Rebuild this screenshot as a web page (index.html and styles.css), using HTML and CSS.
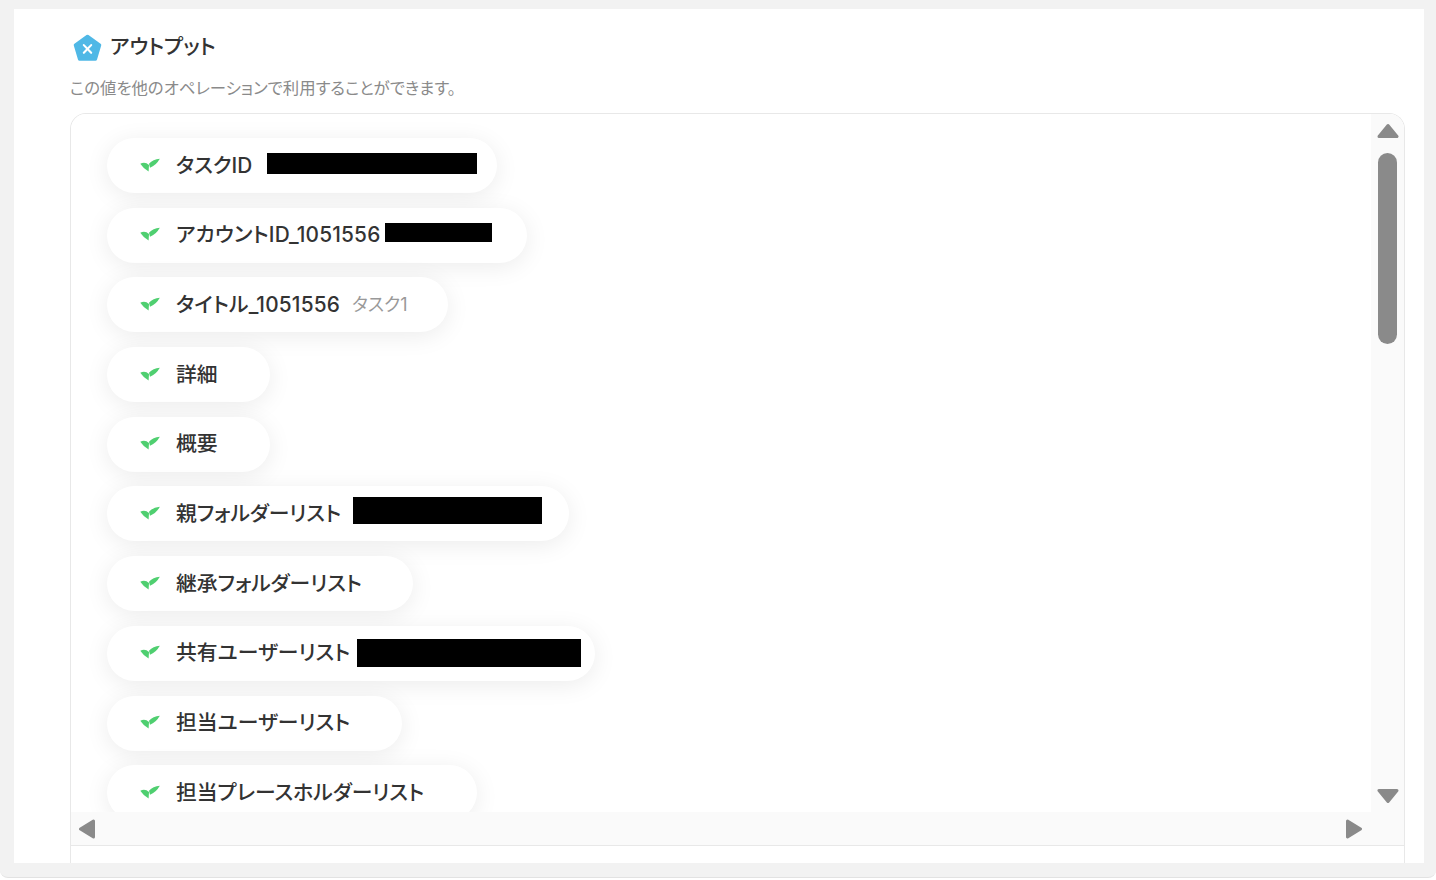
FILE: index.html
```html
<!DOCTYPE html>
<html lang="ja">
<head>
    <meta charset="UTF-8">
    <meta name="viewport" content="width=device-width, initial-scale=1.0">
    <title>アウトプット</title>
    <link rel="stylesheet" href="styles.css">
</head>
<body>

    <!-- チェックアイコン -->
    <svg class="defs" width="0" height="0">
        <symbol id="check" viewBox="0 0 20 14">
            <path d="M0.3 5.8 Q5 3.4 9 7 L8.6 13.4 Q3.6 11 0.3 5.8 Z" fill="#4fcf70"/>
            <path d="M10 9.8 L9 5.8 Q13 1.2 19.8 0.8 Q16.5 7 10 9.8 Z" fill="#4fcf70"/>
        </symbol>
    </svg>

    <div class="frame">
        <div class="card">

            <!-- 見出し -->
            <div class="heading">
                <svg class="heading-icon" viewBox="0 0 30 30">
                    <path d="M15 2.5 L27.5 11.5 L23.2 26 L6.8 26 L2.5 11.5 Z" fill="#4fb8e6" stroke="#4fb8e6" stroke-width="3.5" stroke-linejoin="round"/>
                    <path d="M11.2 11.5 L18.8 19.5 M18.8 11.5 L11.2 19.5" stroke="#fff" stroke-width="2.2" stroke-linecap="round"/>
                </svg>
                <h2>アウトプット</h2>
            </div>
            <p class="note">この値を他のオペレーションで利用することができます。</p>

            <div class="output-box">
                <div class="list-view">
                    <ul class="pill-list">
                        <li class="pill w1">
                            <svg class="check"><use href="#check"/></svg>
                            <span class="label">タスクID</span>
                            <span class="mask m1"></span>
                        </li>
                        <li class="pill w2">
                            <svg class="check"><use href="#check"/></svg>
                            <span class="label label-num">アカウントID_1051556</span>
                            <span class="mask m2"></span>
                        </li>
                        <li class="pill w3">
                            <svg class="check"><use href="#check"/></svg>
                            <span class="label label-num">タイトル_1051556</span>
                            <span class="value">タスク1</span>
                        </li>
                        <li class="pill w4">
                            <svg class="check"><use href="#check"/></svg>
                            <span class="label">詳細</span>
                        </li>
                        <li class="pill w4">
                            <svg class="check"><use href="#check"/></svg>
                            <span class="label">概要</span>
                        </li>
                        <li class="pill w6">
                            <svg class="check"><use href="#check"/></svg>
                            <span class="label">親フォルダーリスト</span>
                            <span class="mask m6"></span>
                        </li>
                        <li class="pill w7">
                            <svg class="check"><use href="#check"/></svg>
                            <span class="label">継承フォルダーリスト</span>
                        </li>
                        <li class="pill w8">
                            <svg class="check"><use href="#check"/></svg>
                            <span class="label">共有ユーザーリスト</span>
                            <span class="mask m8"></span>
                        </li>
                        <li class="pill w9">
                            <svg class="check"><use href="#check"/></svg>
                            <span class="label">担当ユーザーリスト</span>
                        </li>
                        <li class="pill w10">
                            <svg class="check"><use href="#check"/></svg>
                            <span class="label">担当プレースホルダーリスト</span>
                        </li>
                    </ul>

                    <!-- 縦スクロールバー -->
                    <div class="vbar">
                        <svg class="arrow-v" viewBox="0 0 22 16"><path d="M11 2.5 L20 13.5 L2 13.5 Z" fill="#8a8a8a" stroke="#8a8a8a" stroke-width="3" stroke-linejoin="round"/></svg>
                        <div class="vbar-track"><div class="vbar-thumb"></div></div>
                        <svg class="arrow-v" viewBox="0 0 22 16"><path d="M2 2.5 L20 2.5 L11 13.5 Z" fill="#8a8a8a" stroke="#8a8a8a" stroke-width="3" stroke-linejoin="round"/></svg>
                    </div>

                    <!-- 横スクロールバー -->
                    <div class="hbar">
                        <svg class="arrow-h" viewBox="0 0 16 20"><path d="M14.5 2 L14.5 18 L1.5 10 Z" fill="#8a8a8a" stroke="#8a8a8a" stroke-width="3" stroke-linejoin="round"/></svg>
                        <svg class="arrow-h" viewBox="0 0 16 20"><path d="M1.5 2 L14.5 10 L1.5 18 Z" fill="#8a8a8a" stroke="#8a8a8a" stroke-width="3" stroke-linejoin="round"/></svg>
                    </div>
                    <div class="corner"></div>
                </div>
            </div>

        </div>
    </div>

</body>
</html>
```

FILE: styles.css
```css
/* リセット */
* {
    margin: 0;
    padding: 0;
    box-sizing: border-box;
    font-family: 'Inter', 'Noto Sans CJK JP', sans-serif;
    font-feature-settings: "palt";
}

body {
    background: #ffffff;
    overflow: hidden;
}

.defs {
    position: absolute;
}

/* 外枠 */
.frame {
    height: 878px;
    padding: 9px 12px 14px 14px;
    background: #f2f2f2;
    border-bottom: 1px solid #e2e2e2;
    border-radius: 0 0 8px 8px;
}

.card {
    height: 100%;
    padding: 0 19px 0 56px;
    background: #ffffff;
    overflow: hidden;
}

/* 見出し */
.heading {
    display: flex;
    align-items: center;
    gap: 8px;
    height: 48px;
    padding: 25px 0 0 3px;
}

.heading-icon {
    width: 29px;
    height: 29px;
    flex-shrink: 0;
    margin-top: 5px;
}

.heading h2 {
    font-size: 20.8px;
    font-weight: 500;
    color: #333333;
    margin-top: -1px;
}

.note {
    margin-top: 19px;
    font-size: 16.4px;
    line-height: 24px;
    color: #8a8a8a;
}

/* 出力ボックス */
.output-box {
    margin-top: 13px;
    height: 760px;
    border: 1px solid #e8e8e8;
    border-bottom: none;
    border-radius: 16px 16px 0 0;
    overflow: hidden;
}

.list-view {
    display: grid;
    grid-template-columns: 1fr 33px;
    grid-template-rows: 698px 33px;
    border-bottom: 1px solid #e8e8e8;
    background: #ffffff;
}

.pill-list {
    list-style: none;
    display: flex;
    flex-direction: column;
    gap: 14.7px;
    padding: 24px 0 0 36px;
    overflow: hidden;
}

.pill {
    display: flex;
    align-items: center;
    flex-shrink: 0;
    height: 55px;
    padding-left: 33px;
    background: #ffffff;
    border-radius: 28px;
    box-shadow: 0 4px 24px rgba(0, 0, 0, 0.08);
}

/* ピルの幅 */
.w1 { width: 390px; }
.w2 { width: 420px; }
.w3 { width: 341px; }
.w4 { width: 163px; }
.w6 { width: 462px; }
.w7 { width: 306px; }
.w8 { width: 488px; }
.w9 { width: 295px; }
.w10 { width: 370px; }

.check {
    width: 20px;
    height: 14px;
    flex-shrink: 0;
    margin: 0 16px 2px 0;
}

.label {
    padding-bottom: 4px;
    font-size: 20.8px;
    font-weight: 500;
    color: #333333;
    white-space: nowrap;
}

.label-num {
    letter-spacing: 0.2px;
}

.value {
    margin-left: 12px;
    margin-bottom: 3px;
    font-size: 18px;
    color: #999999;
}

/* 伏せ字 */
.mask {
    display: block;
    background: #000000;
}

.m1 { width: 210px; height: 21px; margin: 0 0 4px 15px; }
.m2 { width: 107px; height: 19px; margin: 0 0 5px 5px; }
.m6 { width: 189px; height: 27px; margin: 0 0 6px 12px; }
.m8 { width: 224px; height: 28px; margin-left: 7px; }

/* スクロールバー */
.vbar {
    display: flex;
    flex-direction: column;
    align-items: center;
    padding: 9px 0 8px;
    background: #fafafa;
}

.vbar-track {
    flex: 1;
}

.vbar-thumb {
    width: 19px;
    height: 191px;
    margin-top: 14px;
    background: #8a8a8a;
    border-radius: 10px;
}

.arrow-v {
    width: 22px;
    height: 16px;
}

.hbar {
    display: flex;
    justify-content: space-between;
    align-items: center;
    padding: 0 9px 0 8px;
    background: #fafafa;
}

.arrow-h {
    width: 16px;
    height: 20px;
}

.corner {
    background: #fafafa;
}
```
